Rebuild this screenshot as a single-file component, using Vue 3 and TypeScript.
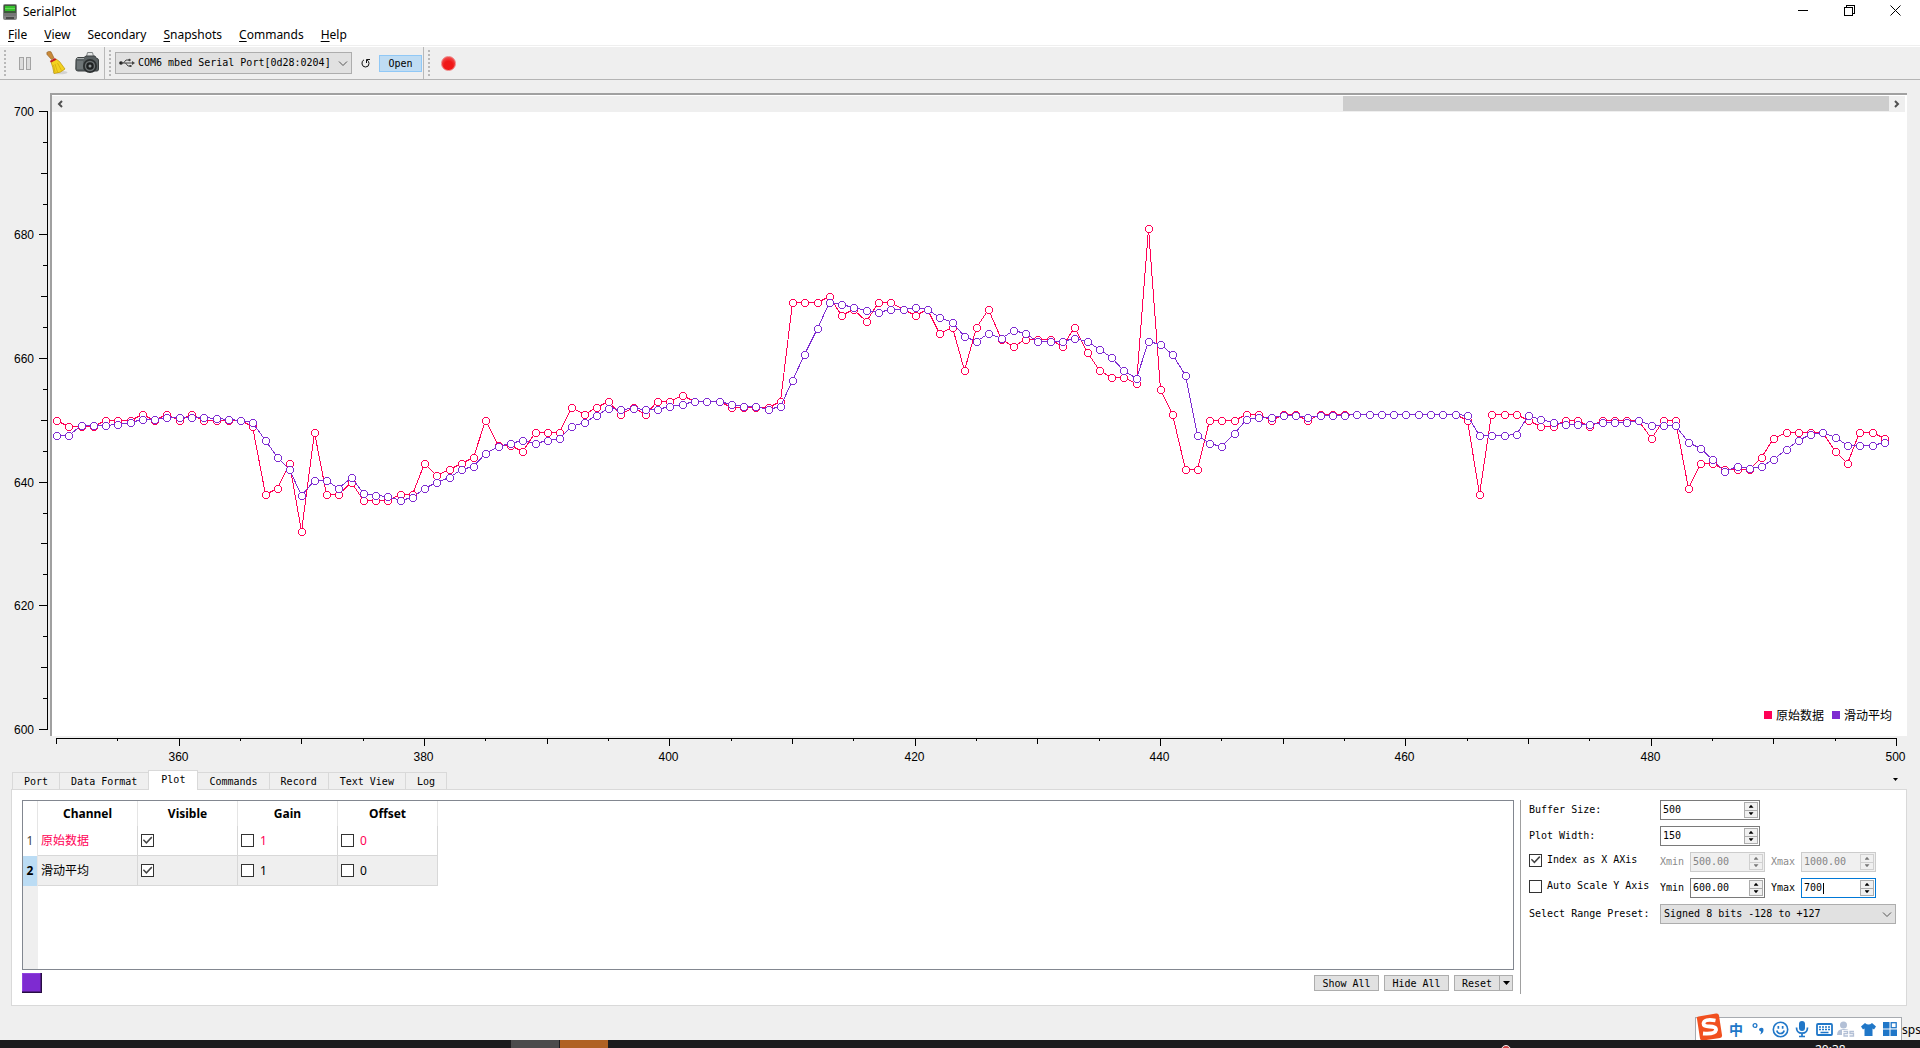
<script setup lang="ts">
import { computed, onBeforeUnmount, onMounted, reactive, ref } from 'vue'

interface Menu { key: string; rest: string }
interface Channel { id: number; name: string; visible: boolean; gain: number; offset: number; color: string; selected: boolean }
interface Tick { value: number; size: number; label: boolean }

const menus: Menu[] = [
  { key: 'F', rest: 'ile' },
  { key: 'V', rest: 'iew' },
  { key: '', rest: 'Secondary' },
  { key: 'S', rest: 'napshots' },
  { key: 'C', rest: 'ommands' },
  { key: 'H', rest: 'elp' },
]

const tabs = ['Port', 'Data Format', 'Plot', 'Commands', 'Record', 'Text View', 'Log']
const activeTab = ref('Plot')

const channels = reactive<Channel[]>([
  { id: 1, name: '原始数据', visible: true, gain: 1, offset: 0, color: '#ff0056', selected: false },
  { id: 2, name: '滑动平均', visible: true, gain: 1, offset: 0, color: '#7e2bd1', selected: true },
])

const form = reactive({
  buffer: '500', width: '150', xmin: '500.00', xmax: '1000.00', ymin: '600.00', ymax: '700',
  indexAsX: true, autoScale: false,
})

// Samples 350..499
const raw = [
  650, 649, 649, 649, 650, 650, 650, 651, 650, 651, 650, 651, 650, 650, 650, 650, 649, 638, 639, 643,
  632, 648, 638, 638, 640, 637, 637, 637, 638, 638, 643, 641, 642, 643, 644, 650, 646, 646, 645, 648,
  648, 648, 652, 651, 652, 653, 651, 652, 651, 653, 653, 654, 653, 653, 653, 652, 652, 652, 652, 653,
  669, 669, 669, 670, 667, 668, 666, 669, 669, 668, 667, 668, 664, 665, 658, 665, 668, 663, 662, 663,
  663, 663, 662, 665, 661, 658, 657, 657, 656, 681, 655, 651, 642, 642, 650, 650, 650, 651, 651, 650,
  651, 651, 650, 651, 651, 651, 651, 651, 651, 651, 651, 651, 651, 651, 651, 650, 638, 651, 651, 651,
  650, 649, 649, 650, 650, 649, 650, 650, 650, 650, 647, 650, 650, 639, 643, 643, 642, 642, 642, 644,
  647, 648, 648, 648, 648, 645, 643, 648, 648, 647,
]
const average = [
  647.6, 647.6, 649.1, 649.1, 649.2, 649.4, 649.6, 650.2, 650.2, 650.4,
  650.4, 650.4, 650.4, 650.3, 650.2, 650, 649.6, 646.7, 643.9, 642.1,
  637.9, 640.3, 640.2, 638.9, 640.8, 638.1, 637.9, 637.6, 637.1, 637.5,
  638.9, 639.9, 640.8, 642.1, 642.5, 644.7, 645.7, 646.3, 646.7, 646.2,
  646.7, 647.1, 649, 649.6, 650.7, 651.9, 651.7, 651.9, 651.7, 651.7,
  652.2, 652.6, 653.1, 653.1, 653.1, 652.6, 652.3, 652.2, 651.8, 652.2,
  656.4, 660.6, 664.9, 669.1, 668.7, 668.3, 667.7, 667.4, 667.9, 667.9,
  668.2, 667.9, 666.7, 665.9, 663.6, 662.8, 664, 663.3, 664.5, 664,
  662.7, 662.7, 662.7, 663.2, 662.7, 661.4, 660.1, 658.1, 656.8, 662.7,
  662.2, 660.6, 657.2, 647.5, 646.2, 645.8, 647.9, 650.2, 650.4, 650.4,
  650.7, 650.7, 650.4, 650.7, 650.7, 650.7, 651, 651, 651, 651,
  651, 651, 651, 651, 651, 650.7, 647.5, 647.5, 647.5, 647.7,
  650.7, 650.2, 649.6, 649.4, 649.4, 649.4, 649.6, 649.6, 649.6, 649.9,
  649.1, 649.1, 649.1, 646.4, 645.4, 643.6, 641.7, 642.5, 642.2, 642.5,
  643.6, 645.2, 646.7, 647.7, 648, 647.2, 645.9, 645.9, 645.9, 646.4,
]

const canvas = ref<HTMLElement | null>(null)
const size = reactive({ w: 1857, h: 643 })
let observer: ResizeObserver | undefined

function measure() {
  if (!canvas.value) return
  size.w = canvas.value.offsetWidth
  size.h = canvas.value.offsetHeight
}
onMounted(() => {
  measure()
  observer = new ResizeObserver(measure)
  if (canvas.value) observer.observe(canvas.value)
})
onBeforeUnmount(() => observer?.disconnect())

// Positions sit on pixel centres so that one-pixel strokes stay sharp
const px = (v: number) => Math.floor(6.6 + ((v - 350) / 150) * (size.w - 17)) + 0.5
const py = (v: number) => Math.round(18.8 + ((700 - v) / 100) * (size.h - 25)) - 0.5

const series = computed(() =>
  [raw, average].map((data, i) => {
    const points = data.map((v, n) => ({ x: px(350 + n), y: py(v) }))
    return { color: channels[i].color, points, path: points.map((p) => `${p.x},${p.y}`).join(' ') }
  }),
)

function ticks(from: number, to: number, major: number, medium: number, minor: number): Tick[] {
  const list: Tick[] = []
  for (let v = from; v <= to; v += 5) {
    const label = v % 20 === 0
    list.push({ value: v, label, size: label ? major : v % 10 === 0 ? medium : minor })
  }
  return list
}
const yTicks = ticks(600, 700, 8, 6, 4)
const xTicks = ticks(350, 500, 8, 6, 3)
</script>

<template>
  <div class="app">
    <header class="titlebar">
      <svg class="app-icon" width="14" height="18" viewBox="0 0 14 18" aria-hidden="true">
        <rect x="0" y="1" width="14" height="16" rx="2" fill="#858585" />
        <rect x="1" y="2" width="12" height="8" fill="#3c5a3a" />
        <rect x="2" y="3" width="10" height="5" fill="#35c02c" />
        <rect x="2" y="5" width="10" height="1" fill="#68dd58" />
        <rect x="1" y="10" width="12" height="3" fill="#767676" />
        <rect x="3" y="14" width="8" height="2" fill="#4a4a4a" />
      </svg>
      <span class="title">SerialPlot</span>
      <div class="window-buttons">
        <button type="button" aria-label="Minimize">
          <svg width="11" height="11"><path d="M0 5.5H10" /></svg>
        </button>
        <button type="button" aria-label="Restore">
          <svg width="11" height="11"><path d="M.5 2.5H8.500V10.500H.5ZM2.500 2.500V.5H10.500V8.500H8.500" /></svg>
        </button>
        <button type="button" aria-label="Close">
          <svg class="smooth" width="11" height="11"><path d="M.5 .5L10.500 10.500M10.500 .5L.5 10.500" /></svg>
        </button>
      </div>
    </header>

    <nav class="menubar">
      <button v-for="m in menus" :key="m.key + m.rest" type="button"><u>{{ m.key }}</u>{{ m.rest }}</button>
    </nav>

    <div class="toolbar">
      <i class="grip"></i>
      <button type="button" class="tool pause" aria-label="Pause">
        <svg width="13" height="13"><rect x=".5" y=".5" width="4" height="12" /><rect x="7.500" y=".5" width="4" height="12" /></svg>
      </button>
      <button type="button" class="tool broom" aria-label="Clear">
        <svg width="22" height="24" viewBox="0 0 22 24">
          <ellipse cx="14" cy="21.500" rx="7.500" ry="1.800" fill="#d2d2d2" />
          <path d="M.8 1.500Q2.500-.3 5 .8L8 7L5.500 8.500L1 3.500Z" fill="#c98a3a" stroke="#8f5a1c" stroke-width=".6" />
          <path d="M5 11L10 8L13.500 10.500L19 18Q15 22 8 22.500Q7 16 5 11Z" fill="#f3d21f" stroke="#b99208" stroke-width=".7" />
          <path d="M9 13L11.500 21M11.500 12L15.500 19.500M7.500 14L9 21" stroke="#d4ab10" stroke-width=".8" fill="none" />
          <path d="M3.800 10L9 7L10.500 8.800L5 11.500Z" fill="#c6201d" />
        </svg>
      </button>
      <button type="button" class="tool camera" aria-label="Take snapshot">
        <svg width="24" height="22" viewBox="0 0 24 22">
          <path d="M11.500 4.500L12.500 .5H17.500L18.500 4.500Z" fill="#e2e4e4" stroke="#7d8283" />
          <path d="M1 8Q1 6 3 5.500H9L11 4H20L21 6Q23.500 6.500 23.500 8V17Q23.500 19 22 19H3Q.8 19 .8 17Z" fill="#596062" stroke="#3c4142" />
          <path d="M2 9H8V17H2Z" fill="#6e7577" />
          <circle cx="15" cy="14" r="7" fill="#2b2f30" />
          <circle cx="15" cy="14" r="5.200" fill="#6b7173" />
          <circle cx="15" cy="14" r="3.800" fill="#1e2122" />
          <circle cx="15" cy="14" r="1.500" fill="#8e9698" />
          <path d="M2 6.500H9" stroke="#a5abac" />
        </svg>
      </button>
      <i class="divider"></i>
      <i class="grip"></i>
      <div class="combo port">
        <svg class="usb" width="16" height="10" viewBox="0 0 16 10">
          <circle cx="2" cy="5" r="1.800" fill="#222" />
          <path d="M2 5H14M4.500 5L7 2H10M6.500 5L9 8H11.500" stroke="#444" fill="none" />
          <circle cx="10.500" cy="2" r="1.200" fill="#444" /><path d="M10.500 7H12.500V9H10.500ZM13 3L16 5L13 7Z" fill="#444" />
        </svg>
        <select aria-label="Serial port"><option>COM6 mbed Serial Port[0d28:0204]</option></select>
        <svg class="chevron" width="10" height="6"><path d="M1 .5L5 4.500L9 .5" /></svg>
      </div>
      <button type="button" class="refresh" aria-label="Refresh ports">
        <svg width="9" height="9" viewBox="0 0 9 9"><path d="M9 .5H5.500V4M3 .8Q.5 2 1 5Q1.500 8 4.500 8Q8 8 8 4.500Q8 2.500 6 .8" fill="none" stroke="#111" /></svg>
      </button>
      <button type="button" class="open">Open</button>
      <i class="divider end"></i>
      <i class="grip"></i>
      <button type="button" class="record" aria-label="Record"></button>
    </div>

    <main class="stage">
      <svg class="y-axis" :height="size.h" width="50">
        <path :d="`M47.5 ${py(700)}V${py(600)}`" />
        <g v-for="t in yTicks" :key="t.value">
          <path :d="`M48 ${py(t.value)}h${-t.size - 1}`" />
          <text v-if="t.label" x="34" :y="py(t.value) + 4" text-anchor="end">{{ t.value }}</text>
        </g>
      </svg>
      <section ref="canvas" class="canvas">
        <div class="scrollbar">
          <button type="button" aria-label="Scroll left"><svg width="6" height="8"><path d="M5 1L2 4L5 7" /></svg></button>
          <div class="track"><div class="thumb"></div></div>
          <button type="button" aria-label="Scroll right"><svg width="6" height="8"><path d="M1 1L4 4L1 7" /></svg></button>
        </div>
        <div class="plot">
          <svg width="100%" height="100%">
            <g v-for="s in series" :key="s.color" transform="translate(-2 -19)" :stroke="s.color">
              <polyline :points="s.path" fill="none" />
              <circle v-for="(p, i) in s.points" :key="i" :cx="p.x + 0.5" :cy="p.y + 0.5" r="3.500" fill="#fff" />
            </g>
          </svg>
        </div>
        <ul class="legend">
          <li v-for="c in channels" :key="c.id"><i :style="{ background: c.color }"></i>{{ c.name }}</li>
        </ul>
      </section>
      <svg class="x-axis" height="34" :width="size.w">
        <path :d="`M${px(350)} 2.500H${px(500)}`" />
        <g v-for="t in xTicks" :key="t.value">
          <path :d="`M${px(t.value)} 2v${t.size}`" />
          <text v-if="t.label" :x="px(t.value) - 1" y="25" text-anchor="middle">{{ t.value }}</text>
        </g>
      </svg>
    </main>

    <div class="tabs" role="tablist">
      <button v-for="t in tabs" :key="t" type="button" role="tab" :class="{ active: t === activeTab }" :aria-selected="t === activeTab" @click="activeTab = t">{{ t }}</button>
      <button type="button" class="tab-menu" aria-label="Hide panel"></button>
    </div>

    <section class="pane">
      <div class="channels">
        <div class="table-frame">
          <div class="row-strip"></div>
          <table>
            <thead>
              <tr><th class="num"></th><th>Channel</th><th>Visible</th><th>Gain</th><th>Offset</th></tr>
            </thead>
            <tbody>
              <tr v-for="c in channels" :key="c.id" :class="{ selected: c.selected }" :style="{ color: c.selected ? '#000' : c.color }">
                <th class="num">{{ c.id }}</th>
                <td>{{ c.name }}</td>
                <td><input v-model="c.visible" type="checkbox" :aria-label="`Show ${c.name}`" /></td>
                <td><label><input type="checkbox" />{{ c.gain }}</label></td>
                <td><label><input type="checkbox" />{{ c.offset }}</label></td>
              </tr>
            </tbody>
          </table>
        </div>
        <div class="actions">
          <button type="button" class="color" aria-label="Channel color"></button>
          <button type="button" class="push first">Show All</button>
          <button type="button" class="push">Hide All</button>
          <button type="button" class="push reset"><span>Reset</span><i></i></button>
        </div>
      </div>

      <form class="settings" @submit.prevent>
        <div class="row">
          <label class="caption" for="buffer">Buffer Size:</label>
          <div class="spin wide"><input id="buffer" v-model="form.buffer" type="text" /><div class="steps"><button type="button" aria-label="Up"></button><button type="button" aria-label="Down"></button></div></div>
        </div>
        <div class="row">
          <label class="caption" for="width">Plot Width:</label>
          <div class="spin wide"><input id="width" v-model="form.width" type="text" /><div class="steps"><button type="button" aria-label="Up"></button><button type="button" aria-label="Down"></button></div></div>
        </div>
        <div class="row">
          <label class="caption check"><input v-model="form.indexAsX" type="checkbox" />Index as X AXis</label>
          <label class="short dim" for="xmin">Xmin</label>
          <div class="spin off"><input id="xmin" v-model="form.xmin" type="text" disabled /><div class="steps"><button type="button" disabled aria-label="Up"></button><button type="button" disabled aria-label="Down"></button></div></div>
          <label class="short next dim" for="xmax">Xmax</label>
          <div class="spin off"><input id="xmax" v-model="form.xmax" type="text" disabled /><div class="steps"><button type="button" disabled aria-label="Up"></button><button type="button" disabled aria-label="Down"></button></div></div>
        </div>
        <div class="row">
          <label class="caption check"><input v-model="form.autoScale" type="checkbox" />Auto Scale Y Axis</label>
          <label class="short" for="ymin">Ymin</label>
          <div class="spin"><input id="ymin" v-model="form.ymin" type="text" /><div class="steps"><button type="button" aria-label="Up"></button><button type="button" aria-label="Down"></button></div></div>
          <label class="short next" for="ymax">Ymax</label>
          <div class="spin focus"><input id="ymax" v-model="form.ymax" type="text" /><i class="caret"></i><div class="steps"><button type="button" aria-label="Up"></button><button type="button" aria-label="Down"></button></div></div>
        </div>
        <div class="row">
          <label class="caption" for="preset">Select Range Preset:</label>
          <div class="combo preset">
            <select id="preset"><option>Signed 8 bits -128 to +127</option></select>
            <svg class="chevron" width="10" height="6"><path d="M1 .5L5 4.500L9 .5" /></svg>
          </div>
        </div>
      </form>
    </section>

    <footer class="status">
      <div class="ime">
        <svg class="sogou" width="28" height="28" viewBox="0 0 28 28">
          <path d="M2 6Q1 4 3.500 3.500L21 .5Q23.500 0 24 2.500L27 22Q27.500 24.500 25 25L8 27.500Q5.500 28 5 25.500Z" fill="#f1501f" />
          <path d="M20.500 7.500Q9 5.500 8.500 10.500Q8.500 13.500 14.500 13.500Q21.500 13.500 21 17Q20 21.500 8 20.500" fill="none" stroke="#fff" stroke-width="3.800" />
        </svg>
        <span class="cell lang">中</span>
        <span class="cell"><svg width="12" height="14" viewBox="0 0 12 14"><circle cx="3" cy="3.500" r="1.900" fill="none" stroke="#2077c8" stroke-width="1.300" /><path d="M8.500 6A2 2 0 0 1 11.500 8Q11.500 11 8 12.500Q9.500 10.500 9 9.500Q7 9 7 7.500Q7 6 8.500 6Z" fill="#2077c8" /></svg></span>
        <span class="cell"><svg width="17" height="17" viewBox="0 0 17 17"><g fill="none" stroke="#2077c8" stroke-width="1.600"><circle cx="8.500" cy="8.500" r="7.200" /><path d="M4.800 9.500Q5.500 12.500 8.500 12.500T12.200 9.500" /></g><path d="M5.500 5H7.200V7.800H5.500ZM9.800 5H11.500V7.800H9.800Z" fill="#2077c8" /></svg></span>
        <span class="cell"><svg width="14" height="17" viewBox="0 0 14 17"><rect x="4" y="0" width="6" height="10" rx="3" fill="#2077c8" /><path d="M1.500 6.500Q1.500 12.200 7 12.200T12.500 6.500M7 12V15.500M4 15.500H10" fill="none" stroke="#2077c8" stroke-width="1.700" /></svg></span>
        <span class="cell"><svg width="17" height="13" viewBox="0 0 17 13"><rect x="1" y="1" width="15" height="11" rx="1" fill="#fff" stroke="#2077c8" stroke-width="1.800" /><path d="M3 4H14M3 6.500H14" stroke="#2077c8" stroke-width="1.500" stroke-dasharray="2 1" /><path d="M4.500 9.500H12.500" stroke="#2077c8" stroke-width="1.500" /></svg></span>
        <span class="cell"><svg width="18" height="17" viewBox="0 0 18 17"><circle cx="6.500" cy="4" r="3.500" fill="#b3c0d6" /><path d="M0 14Q0 8 6.500 8Q12 8 12 10V14Z" fill="#b3c0d6" /><rect x="5" y="9" width="13" height="7" fill="#fff" /><path d="M6.500 10.500H10.500V12.700H7V15H11M17 10.500H13V12.500H16.500V15H12.500" fill="none" stroke="#b3c0d6" stroke-width="1.300" /></svg></span>
        <span class="cell"><svg width="15" height="15" viewBox="0 0 15 15"><path d="M4 1Q7.500 4 11 1L15 4.500L13 7.500L11.500 6.500V14H3.500V6.500L2 7.500L0 4.500Z" fill="#2077c8" /></svg></span>
        <span class="cell"><svg width="14" height="14" viewBox="0 0 14 14"><path d="M0 0H6.500V6.500H0ZM0 7.500H6.500V14H0ZM7.500 7.500H14V14H7.500Z" fill="#2077c8" /><rect x="8.200" y=".7" width="5" height="5" fill="none" stroke="#2077c8" stroke-width="1.300" /></svg></span>
      </div>
      <span class="rate">sps</span>
    </footer>

    <div class="taskbar"><i class="gray"></i><i class="orange"></i><b></b><span>20:38</span></div>
  </div>
</template>

<style>
html, body { margin: 0; background: #efefef; }
</style>

<style scoped>
* { box-sizing: border-box; }
.app { display: flex; flex-direction: column; min-height: 100vh; overflow: hidden; background: #efefef; color: #000; font: 10px/12px "DejaVu Sans Mono", "Liberation Mono", "Noto Sans CJK SC", monospace; }
button { padding: 0; margin: 0; border: 0; background: none; color: inherit; font: inherit; }
input, select { margin: 0; font: inherit; color: inherit; }
svg { display: block; flex: none; }

.titlebar { display: flex; align-items: center; height: 23px; padding: 0 2px 0 3px; background: #fff; }
.title { margin-left: 6px; font: 12px/16px "Noto Sans", sans-serif; }
.window-buttons { display: flex; margin-left: auto; align-self: flex-start; }
.window-buttons button { display: flex; align-items: center; justify-content: center; width: 46px; height: 21px; }
.window-buttons svg { fill: none; stroke: #000; shape-rendering: crispEdges; }
.window-buttons .smooth { shape-rendering: auto; }
.menubar { display: flex; gap: 17px; height: 24px; padding: 0 8px; background: #fff; border-bottom: 1px solid #fff; box-shadow: inset 0 -1px #efefef; font: 12px/24px "Noto Sans", sans-serif; }
.menubar u { text-underline-offset: 2px; }

.toolbar { display: flex; align-items: center; height: 33px; padding-left: 4px; border-bottom: 1px solid #b4b4b4; }
.grip { width: 2px; height: 27px; background: repeating-linear-gradient(#b8b8b8 0 2px, transparent 2px 4px); }
.divider { align-self: stretch; width: 1px; margin: 0 4px; background: #b9b9b9; }
.divider.end { margin: 0 4px 0 1px; }
.pause { margin-left: 13px; }
.pause svg { fill: #dcdcdc; stroke: #a3a3a3; }
.broom { margin-left: 14px; }
.camera { margin-left: 7px; }
.tool + .divider { margin-left: 5px; }
.combo { position: relative; }
.combo select { appearance: none; display: block; width: 100%; border: 1px solid #adadad; border-radius: 0; background: #e1e1e1; outline: 0; }
.combo .chevron { position: absolute; right: 4px; top: 50%; margin-top: -2px; fill: none; stroke: #555; pointer-events: none; }
.port { width: 237px; margin-left: 4px; }
.port select { height: 22px; padding: 0 0 0 22px; }
.usb { position: absolute; left: 4px; top: 6px; }
.refresh { margin-left: 9px; }
.open { width: 43px; height: 17px; margin-left: 9px; padding-top: 2px; border: 1px solid #90c8f6; background: #bfdcf3; }
.record { width: 15px; height: 15px; margin-left: 11px; border-radius: 50%; border: 1px solid #f08080; background: radial-gradient(circle at 50% 65%, #f01818 40%, #f04a4a 75%); }

.stage { display: grid; flex: 1; grid-template-columns: 50px minmax(0, 1fr); grid-template-rows: minmax(300px, 1fr) 34px; padding: 13px 13px 0 0; }
.stage svg { shape-rendering: crispEdges; overflow: visible; }
.y-axis, .x-axis { fill: none; stroke: #000; }
.y-axis { position: absolute; }
.x-axis { grid-column: 2; }
.stage text { fill: #000; stroke: none; font: 12px "Liberation Sans", sans-serif; }
.canvas { position: relative; grid-column: 2; display: flex; flex-direction: column; min-height: 0; border: 2px solid #a0a0a0; border-width: 2px 0 0 2px; background: #fff; }
.scrollbar { display: flex; height: 16px; margin: 1px 2px 0 0; background: #efefef; }
.scrollbar button { display: flex; align-items: center; justify-content: center; width: 16px; }
.scrollbar path { fill: none; stroke: #505050; stroke-width: 2px; }
.scrollbar svg { shape-rendering: auto; }
.track { flex: 1; display: flex; justify-content: flex-end; }
.thumb { width: 30%; height: 15px; background: #cdcdcd; }
.plot { flex: 1; min-height: 0; }
.legend { position: absolute; right: 15px; bottom: 12px; display: flex; gap: 8px; margin: 0; padding: 0; list-style: none; font: 12px/18px "Noto Sans CJK SC", sans-serif; }
.legend li { display: flex; align-items: center; gap: 4px; }
.legend i { width: 8px; height: 8px; }

.tabs { display: flex; align-items: flex-end; height: 19px; padding-left: 12px; }
.tabs button { height: 17px; padding: 2px 11px 0; margin-right: -1px; border: 1px solid #d9d9d9; border-bottom: 0; }
.tabs button.active { height: 20px; padding: 0 12px 1px; margin-bottom: -1px; background: #fff; position: relative; }
.tabs .tab-menu { width: 5px; height: 3px; padding: 0; margin: 0 22px 8px auto; border: 0; background: #000; clip-path: polygon(0 0, 100% 0, 50% 100%); }
.pane { display: flex; margin: 0 13px 0 11px; height: 217px; padding: 10px; border: 1px solid #d9d9d9; background: #fff; }
.channels { flex: 1; display: flex; flex-direction: column; min-width: 0; }
.table-frame { display: flex; height: 170px; border: 1px solid #828790; position: relative; }
.row-strip { position: absolute; left: 0; top: 85px; bottom: 0; width: 15px; background: #efefef; }
table { border-collapse: separate; border-spacing: 0; table-layout: fixed; width: 415px; align-self: flex-start; font: 12px/16px "Noto Sans", "Noto Sans CJK SC", sans-serif; }
th { height: 25px; padding: 0; border-right: 1px solid #e5e5e5; width: 100px; }
.num { width: 15px; font-weight: 400; color: #444; border-right-color: #e5e5e5; }
td { height: 30px; padding: 0 3px; border: 1px solid #d8d8d8; border-width: 0 1px 1px 0; }
td label { display: flex; align-items: center; gap: 6px; }
.selected td { background: #efefef; }
.selected .num { background: #bbdcf4; font-weight: 700; color: #000; }
input[type="checkbox"] { appearance: none; display: block; flex: none; width: 13px; height: 13px; border: 1px solid #333; background: #fff; }
input[type="checkbox"]:checked::before { content: ""; display: block; width: 11px; height: 11px; background: #444; clip-path: polygon(8% 48%, 17% 39%, 40% 62%, 84% 14%, 94% 24%, 40% 82%); }
.actions { display: flex; gap: 5px; padding: 3px 1px 0 0; }
.color { width: 20px; height: 20px; border: 1px solid #280d43; border-width: 0 1px 1px 0; background: #7e2bd1; box-shadow: inset -1px -1px #541d8b, inset 1px 1px #9042de; }
.push { width: 65px; height: 16px; margin-top: 2px; border: 1px solid #adadad; background: #e1e1e1; line-height: 16px; }
.push.first { margin-left: auto; }
.reset { display: flex; width: 59px; align-items: center; }
.reset span { flex: 1; height: 14px; border-right: 1px solid #a8a8a8; }
.reset i { width: 7px; height: 4px; margin: 0 2px 0 3px; background: #000; clip-path: polygon(0 0, 100% 0, 50% 100%); }

.settings { display: flex; flex-direction: column; gap: 6px; width: 376px; height: 194px; margin-left: 6px; padding-left: 8px; border-left: 1px solid #a0a0a0; }
.row { display: flex; align-items: center; height: 20px; }
.caption { display: flex; align-items: center; gap: 5px; width: 131px; white-space: nowrap; }
.check { margin-bottom: 4px; }
.short { width: 30px; }
.next { margin-left: 6px; }
.dim { color: #8a8a8a; }
.spin { position: relative; display: flex; width: 75px; height: 20px; padding: 1px; border: 1px solid #7a7a7a; background: #fff; }
.spin.wide { width: 100px; }
.spin.off { border-color: #ccc; background: #f0f0f0; color: #838383; }
.spin.focus { border-color: #0078d7; }
.spin input { flex: 1; min-width: 0; padding: 0 0 0 1px; border: 0; outline: 0; background: none; }
.caret { position: absolute; left: 21px; top: 4px; width: 1px; height: 11px; background: #000; }
.steps { display: flex; flex-direction: column; width: 14px; }
.steps button { display: flex; align-items: center; justify-content: center; flex: 1; border: 1px solid #acacac; background: #f0f0f0; }
.steps button + button { margin-top: -1px; }
.steps button::before { content: ""; width: 5px; height: 3px; background: #000; clip-path: polygon(50% 0, 100% 100%, 0 100%); }
.steps button + button::before { clip-path: polygon(0 0, 100% 0, 50% 100%); }
.off .steps button { border-color: #d0d0d0; }
.off .steps button::before { background: #777; }
.preset { width: 236px; }
.preset select { height: 20px; padding: 0 3px; }

.status { display: flex; justify-content: flex-end; align-items: flex-end; height: 34px; }
.ime { display: flex; align-items: center; width: 207px; height: 23px; border: 1px solid #a7abb0; border-bottom: 0; background: #fff; }
.sogou { margin: -4px 2px 0 -1px; }
.cell { display: flex; align-items: center; justify-content: center; width: 22px; height: 20px; }
.lang { color: #2077c8; font: 700 14px/20px "Noto Sans CJK SC", sans-serif; }
.rate { width: 18px; height: 20px; font: 12px/20px "Noto Sans", sans-serif; }
.taskbar { position: relative; display: flex; height: 8px; overflow: hidden; background: #1c1b1d; color: #fff; }
.taskbar .gray { width: 48px; margin-left: 511px; background: #4b4b4c; }
.taskbar .orange { width: 48px; margin-left: 1px; background: #b06124; }
.taskbar b { width: 10px; height: 10px; margin: 5px 304px 0 auto; border-radius: 50%; border: 1px solid #eee; background: #c44; }
.taskbar span { margin-right: 74px; font: 12px/16px "Noto Sans", sans-serif; padding-top: 2px; width: 31px; }
</style>
